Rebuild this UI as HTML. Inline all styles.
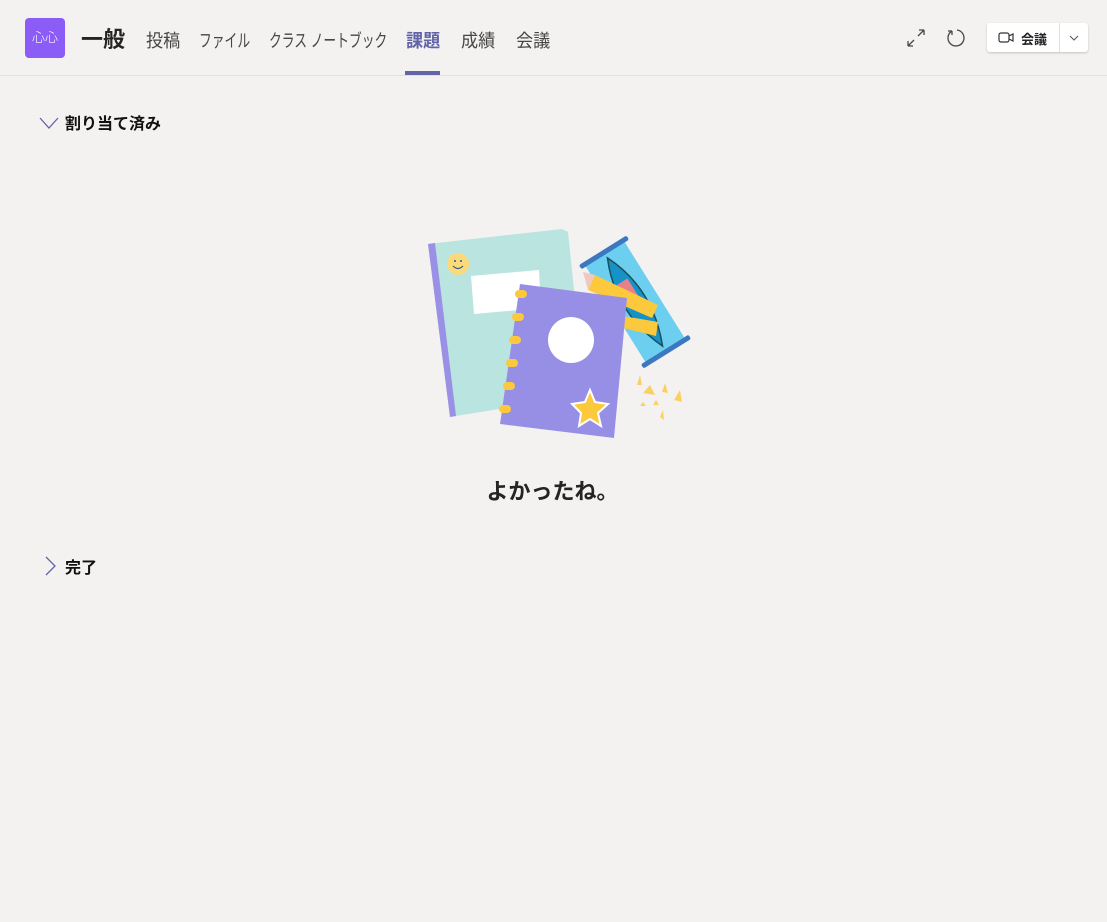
<!DOCTYPE html>
<html><head><meta charset="utf-8"><style>
body{margin:0;width:1107px;height:922px;background:#f3f2f1;font-family:"Liberation Sans","Noto Sans CJK JP",sans-serif;position:relative;overflow:hidden;color:#252423}
.hdr{position:absolute;left:0;top:0;width:1107px;height:75px;border-bottom:1px solid #e1dfdd}
.logo{position:absolute;left:25px;top:18px;width:40px;height:40px;background:#8b5cf6;border-radius:4px;color:#fff;font-size:13px;line-height:40px;text-align:center;font-weight:300}
.title{position:absolute;left:81px;top:22px;font-size:22px;font-weight:bold}
.tab{position:absolute;top:27px;font-size:18px;color:#484644;transform:scaleX(0.71);transform-origin:0 0;white-space:nowrap}
.k{transform:scaleX(0.95)}
.act{color:#6264a7;font-weight:bold}
.ul{position:absolute;left:405px;top:71px;width:35px;height:4px;background:#6264a7}
.btn{position:absolute;left:987px;top:23px;width:101px;height:29px;background:#fff;border-radius:3px;box-shadow:0 1px 2px rgba(0,0,0,.2)}
.sec{position:absolute;font-size:16px;font-weight:bold;color:#111}
</style></head><body>
<div class="hdr">
<div class="logo">心心</div>
<div class="title">一般</div>
<div class="tab k" style="left:146px">投稿</div>
<div class="tab" style="left:199px">ファイル</div>
<div class="tab" style="left:269px">クラス ノートブック</div>
<div class="tab k act" style="left:406px">課題</div>
<div class="tab k" style="left:461px">成績</div>
<div class="tab k" style="left:516px">会議</div>
<div class="ul"></div>
<svg style="position:absolute;left:905px;top:27px" width="22" height="22" viewBox="0 0 22 22" fill="none" stroke="#484644" stroke-width="1.3"><path d="M3 19L9 13M3 19V14M3 19H8M19 3L13 9M19 3V8M19 3H14"/></svg>
<svg style="position:absolute;left:945px;top:27px" width="22" height="22" viewBox="0 0 22 22" fill="none" stroke="#484644" stroke-width="1.3"><path d="M7 4A8 8 0 1 0 12 3M7 4V8M7 4H3"/></svg>
<div class="btn">
<svg style="position:absolute;left:10px;top:7px" width="18" height="15" viewBox="0 0 18 15" fill="none" stroke="#333" stroke-width="1.2"><rect x="2" y="3" width="10" height="9" rx="2"/><path d="M12 6L16 4V11L12 9"/></svg>
<span style="position:absolute;left:34px;top:6px;font-size:13px;font-weight:bold">会議</span>
<div style="position:absolute;left:72px;top:0;width:1px;height:29px;background:#e1dfdd"></div>
<svg style="position:absolute;left:81px;top:10px" width="12" height="9" viewBox="0 0 12 9" fill="none" stroke="#555" stroke-width="1"><path d="M2 3L6 7L10 3"/></svg>
</div>
</div>
<svg style="position:absolute;left:39px;top:116px" width="20" height="14" viewBox="0 0 20 14" fill="none" stroke="#6264a7" stroke-width="1.3"><path d="M1 2L10 12L19 2"/></svg>
<div class="sec" style="left:65px;top:110px">割り当て済み</div>
<svg style="position:absolute;left:44px;top:556px" width="12" height="20" viewBox="0 0 12 20" fill="none" stroke="#6264a7" stroke-width="1.3"><path d="M2 1L11 10L2 19"/></svg>
<div class="sec" style="left:65px;top:554px">完了</div>

<svg style="position:absolute;left:0;top:0" width="1107" height="922">
<polygon points="428,244 562,229 568,232 585,395 450,417" fill="#b9e4e0"/>
<polygon points="428,244 435,243 456,416 450,417" fill="#9a91e6"/>
<circle cx="458" cy="264" r="11" fill="#fcd97a"/>
<path d="M453 266Q458 271 463 266" stroke="#2d5a8a" fill="none" stroke-width="1.2"/>
<circle cx="455" cy="261" r="1" fill="#2d5a8a"/><circle cx="461" cy="261" r="1" fill="#2d5a8a"/>
<polygon points="471,276 539,270 541,308 474,314" fill="#fff"/>
<g transform="rotate(-32 635 302)">
<rect x="612" y="244" width="46" height="116" fill="#6ccff0"/>
<rect x="607" y="241" width="56" height="5" rx="2" fill="#3b78c0"/>
<rect x="607" y="358" width="56" height="5" rx="2" fill="#3b78c0"/>
<path d="M635 250Q658 300 635 354Q612 300 635 250Z" fill="#1593c8" stroke="#1d4e5a" stroke-width="1.5"/>
<rect x="629" y="278" width="12" height="28" fill="#e8808a"/>
</g>
<polygon points="595,275 658,305 652,318 588,290" fill="#fcc93d"/>
<polygon points="583,272 595,275 588,290" fill="#f0c8c0"/>
<polygon points="600,312 658,322 656,336 598,322" fill="#fcc93d"/>
<circle cx="594" cy="314" r="6" fill="#f0b0b0"/>
<polygon points="520,284 627,298 614,438 500,424" fill="#978fe6"/>
<circle cx="571" cy="340" r="23" fill="#fff"/>
<polygon points="590,390 595,402 608,404 598,413 601,426 590,419 579,426 581,413 572,404 585,402" fill="#fcc93d" stroke="#fff" stroke-width="2"/>
<g fill="#fcc93d"><rect x="515" y="290" width="12" height="8" rx="4"/><rect x="512" y="313" width="12" height="8" rx="4"/><rect x="509" y="336" width="12" height="8" rx="4"/><rect x="506" y="359" width="12" height="8" rx="4"/><rect x="503" y="382" width="12" height="8" rx="4"/><rect x="499" y="405" width="12" height="8" rx="4"/></g>
<g fill="#fcc93d" opacity=".8"><polygon points="640,375 642,385 637,385"/><polygon points="650,385 655,395 643,393"/><polygon points="665,383 668,393 662,392"/><polygon points="680,390 682,402 674,400"/><polygon points="643,402 646,406 640,406"/><polygon points="656,400 659,405 653,405"/><polygon points="663,410 664,420 660,417"/></g>
</svg>
<div style="position:absolute;left:0;width:1107px;top:474px;text-align:center;font-size:22px;font-weight:bold;color:#252423;text-indent:-2px">よかったね。</div>
</body></html>
